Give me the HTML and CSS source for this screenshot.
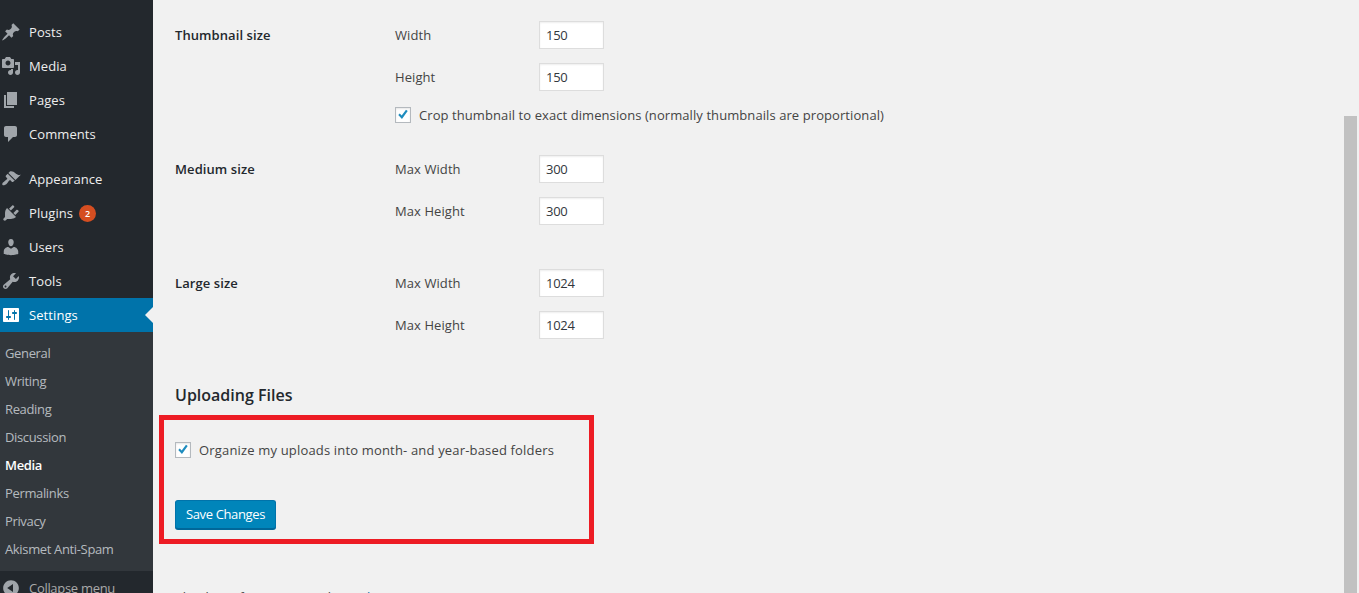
FILE: index.html
```html
<!DOCTYPE html>
<html lang="en">
<head>
  <meta charset="UTF-8" />
  <title>Media Settings</title>
  <link rel="stylesheet" href="styles.css">
</head>
<body>

  <div class="sidebar">
    <ul class="menu">
      <li><svg class="icon" viewBox="0 0 20 20"><path d="M10.44 3.02l1.82-1.82 6.36 6.35-1.83 1.82c-1.05-.68-2.48-.57-3.41.36l-.75.75c-.92.93-1.04 2.35-.35 3.41l-1.83 1.82-2.41-2.41-2.8 2.79c-.42.42-3.38 2.71-3.8 2.29s1.86-3.39 2.28-3.81l2.79-2.79L4.1 9.36l1.83-1.82c1.05.69 2.48.57 3.4-.36l.75-.75c.93-.92 1.05-2.35.36-3.41z"/></svg>Posts</li>
      <li><svg class="icon" viewBox="0 0 20 20"><path d="M13 11V4c0-.55-.45-1-1-1h-1.67L9 1H5L3.67 3H2c-.55 0-1 .45-1 1v7c0 .55.45 1 1 1h10c.55 0 1-.45 1-1zM7 4.5c1.38 0 2.5 1.12 2.5 2.5S8.38 9.5 7 9.5 4.5 8.38 4.5 7 5.62 4.5 7 4.5zM14 6h5v10.5c0 1.38-1.12 2.5-2.5 2.5S14 17.88 14 16.5s1.12-2.5 2.5-2.5c.17 0 .34.02.5.05V9h-3V6zm-4 8.05V13h2v3.5c0 1.38-1.12 2.5-2.5 2.5S7 17.88 7 16.5 8.12 14 9.5 14c.17 0 .34.02.5.05z"/></svg>Media</li>
      <li><svg class="icon" viewBox="0 0 20 20"><path d="M6 15V2h10v13H6zm-1 1h8v2H3V5h2v11z"/></svg>Pages</li>
      <li><svg class="icon" viewBox="0 0 20 20"><path d="M5 2h9c1.1 0 2 .9 2 2v7c0 1.1-.9 2-2 2h-2l-5 5v-5H5c-1.1 0-2-.9-2-2V4c0-1.1.9-2 2-2z"/></svg>Comments</li>
      <li class="separator"></li>
      <li><svg class="icon" viewBox="0 0 20 20"><path d="M14.48 11.06L7.41 3.99l1.5-1.5c.5-.56 2.3-.47 3.51.32 1.21.8 1.43 1.28 2.91 2.1 1.18.64 2.45 1.26 4.45.85zm-.71.71L6.7 4.7 4.93 6.47c-.39.39-.39 1.02 0 1.41l1.06 1.06c.39.39.39 1.03 0 1.42-.6.6-1.43 1.11-2.21 1.69-.35.26-.7.53-1.01.84C1.43 13.23.78 15.21 1.53 16s2.79.2 4.22-1.16c.31-.31.57-.66.84-1.01.58-.78 1.09-1.61 1.69-2.21.39-.39 1.03-.39 1.42 0l1.06 1.06c.39.39 1.02.39 1.41 0z"/></svg>Appearance</li>
      <li><svg class="icon" viewBox="0 0 20 20"><path d="M13.11 4.36L9.87 7.6 8 5.73l3.24-3.24c.35-.34 1.05-.2 1.56.32.52.51.66 1.21.31 1.55zm-8 1.77l.91-1.12 9.01 9.01-1.19.84c-.71.71-2.63 1.16-3.82 1.16H6.14L4.9 17.26c-.59.59-1.54.59-2.12 0-.59-.58-.59-1.53 0-2.12l1.24-1.24v-3.88c0-1.13.4-3.19 1.09-3.89zm7.26 3.97l3.24-3.24c.34-.35 1.04-.21 1.55.31.52.51.66 1.21.31 1.55l-3.24 3.25z"/></svg>Plugins<span class="badge">2</span></li>
      <li><svg class="icon" viewBox="0 0 20 20"><path d="M10 9.25c-2.27 0-2.73-3.44-2.73-3.44C7 4.02 7.82 2 9.97 2c2.16 0 2.98 2.02 2.71 3.81 0 0-.41 3.44-2.68 3.44zm0 2.57L12.72 10c2.39 0 4.52 2.33 4.52 4.53v2.49s-3.65 1.13-7.24 1.13c-3.65 0-7.24-1.13-7.24-1.13v-2.49c0-2.25 1.94-4.48 4.47-4.48z"/></svg>Users</li>
      <li><svg class="icon" viewBox="0 0 20 20"><path d="M16.68 9.77c-1.34 1.34-3.3 1.67-4.95.99l-5.41 6.52c-.99.99-2.59.99-3.58 0s-.99-2.59 0-3.57l6.52-5.42c-.68-1.65-.35-3.61.99-4.95 1.28-1.28 3.12-1.62 4.72-1.06l-2.89 2.89 2.82 2.82 2.86-2.87c.53 1.58.18 3.39-1.08 4.65zM3.81 16.21c.4.39 1.04.39 1.43 0 .4-.4.4-1.04 0-1.43-.39-.4-1.03-.4-1.43 0-.39.39-.39 1.03 0 1.43z"/></svg>Tools</li>
      <li class="current"><svg class="icon" viewBox="0 0 20 20"><path d="M18 16V4c0-.55-.45-1-1-1H3c-.55 0-1 .45-1 1v12c0 .55.45 1 1 1h14c.55 0 1-.45 1-1zM8 11h1c.55 0 1 .45 1 1s-.45 1-1 1H8v1.5c0 .28-.22.5-.5.5s-.5-.22-.5-.5V13H6c-.55 0-1-.45-1-1s.45-1 1-1h1V5.5c0-.28.22-.5.5-.5s.5.22.5.5V11zm5-2h-1c-.55 0-1-.45-1-1s.45-1 1-1h1V5.5c0-.28.22-.5.5-.5s.5.22.5.5V7h1c.55 0 1 .45 1 1s-.45 1-1 1h-1v5.5c0 .28-.22.5-.5.5s-.5-.22-.5-.5V9z"/></svg>Settings</li>
    </ul>
    <ul class="submenu">
      <li>General</li>
      <li>Writing</li>
      <li>Reading</li>
      <li>Discussion</li>
      <li class="active">Media</li>
      <li>Permalinks</li>
      <li>Privacy</li>
      <li>Akismet Anti-Spam</li>
    </ul>
    <div class="collapse">
      <svg class="icon" viewBox="0 0 20 20"><path d="M10 2.16c4.33 0 7.84 3.51 7.84 7.84s-3.51 7.84-7.84 7.84S2.16 14.33 2.16 10 5.71 2.16 10 2.16zm2 11.72V6.12L6.18 9.97z"/></svg>Collapse menu
    </div>
  </div>

  <div class="content">
    <div class="setting thumbnail">
      <div class="setting-name">Thumbnail size</div>
      <div class="fields">
        <label class="field"><span>Width</span><input type="text" value="150"></label>
        <label class="field"><span>Height</span><input type="text" value="150"></label>
        <div class="check-row">
          <span class="checkbox"><svg viewBox="0 0 16 16"><path d="M2.6 8l1.7-1.7 2.2 2.3 4.9-6.7 2 1.4-6.6 9.2z"/></svg></span>
          Crop thumbnail to exact dimensions (normally thumbnails are proportional)
        </div>
      </div>
    </div>

    <div class="setting medium">
      <div class="setting-name">Medium size</div>
      <div class="fields">
        <label class="field"><span>Max Width</span><input type="text" value="300"></label>
        <label class="field"><span>Max Height</span><input type="text" value="300"></label>
      </div>
    </div>

    <div class="setting">
      <div class="setting-name">Large size</div>
      <div class="fields">
        <label class="field"><span>Max Width</span><input type="text" value="1024"></label>
        <label class="field"><span>Max Height</span><input type="text" value="1024"></label>
      </div>
    </div>

    <h2>Uploading Files</h2>
    <div class="check-row uploads">
      <span class="checkbox"><svg viewBox="0 0 16 16"><path d="M2.6 8l1.7-1.7 2.2 2.3 4.9-6.7 2 1.4-6.6 9.2z"/></svg></span>
      Organize my uploads into month- and year-based folders
    </div>
    <button class="save-btn">Save Changes</button>

    <div class="footer">
      <span class="thanks">Thank you for creating with <a href="#">WordPress</a>.</span>
      <a class="version" href="#">Get Version 5.0</a>
    </div>

    <div class="highlight"></div>
  </div>

  <div class="scroll-thumb"></div>

</body>
</html>
```

FILE: styles.css
```css
html, body {
  height: 593px;
  overflow: hidden;
}

body {
  margin: 0;
  display: flex;
  background-color: #f1f1f1;
  color: #444;
  font-family: "Open Sans", sans-serif;
  font-size: 13px;
  letter-spacing: 0.08px;
}

ul {
  list-style: none;
  margin: 0;
  padding: 0;
}

.sidebar {
  width: 153px;
  height: 593px;
  flex-shrink: 0;
  background-color: #23282d;
  overflow: hidden;
}

.menu {
  padding-top: 15px;
}

.menu li {
  height: 34px;
  display: flex;
  align-items: center;
  color: #eee;
  position: relative;
}

.menu .separator {
  height: 11px;
}

.icon {
  width: 20px;
  height: 20px;
  margin: 0 8px 0 1px;
  fill: #a0a5aa;
  flex-shrink: 0;
}

.menu .current {
  background-color: #0073aa;
  color: #fff;
}

.menu .current .icon {
  fill: #fff;
}

.menu .current::after {
  content: "";
  position: absolute;
  right: 0;
  top: 9px;
  border: 8px solid transparent;
  border-right-color: #f1f1f1;
  border-left-width: 0;
}

.badge {
  width: 17px;
  height: 17px;
  margin-left: 6px;
  border-radius: 50%;
  background-color: #d54e21;
  color: #fff;
  font-size: 9px;
  font-weight: 600;
  letter-spacing: 0;
  display: flex;
  align-items: center;
  justify-content: center;
}

.submenu {
  background-color: #32373c;
  padding: 7px 0 8px 5px;
  letter-spacing: -0.35px;
}

.submenu li {
  height: 28px;
  line-height: 28px;
  color: rgba(240, 245, 250, 0.7);
}

.submenu .active {
  color: #fff;
  font-weight: 600;
}

.collapse {
  height: 34px;
  display: flex;
  align-items: center;
  color: #aaa;
  letter-spacing: -0.3px;
}

.content {
  flex: 1;
  padding: 21px 0 0 22px;
  position: relative;
}

.setting {
  display: flex;
}

.setting-name {
  width: 220px;
  line-height: 28px;
  font-weight: 600;
  color: #23282d;
}

.fields {
  display: flex;
  flex-direction: column;
  gap: 14px;
}

.thumbnail {
  margin-bottom: 30px;
}

.medium {
  margin-bottom: 44px;
}

.field {
  display: flex;
  align-items: center;
}

.field span {
  width: 144px;
}

.field input {
  width: 65px;
  height: 28px;
  box-sizing: border-box;
  padding: 0 6px;
  border: 1px solid #ddd;
  box-shadow: inset 0 1px 2px rgba(0, 0, 0, 0.07);
  background-color: #fff;
  color: #32373c;
  font: inherit;
  letter-spacing: -0.3px;
  outline: none;
}

.check-row {
  height: 20px;
  display: flex;
  align-items: center;
  gap: 8px;
}

.checkbox {
  width: 16px;
  height: 16px;
  box-sizing: border-box;
  border: 1px solid #b4b9be;
  background-color: #fff;
  box-shadow: inset 0 1px 2px rgba(0, 0, 0, 0.1);
  flex-shrink: 0;
}

.checkbox svg {
  display: block;
  width: 14px;
  height: 14px;
  fill: #1e8cbe;
}

h2 {
  margin: 46px 0 0;
  height: 20px;
  line-height: 20px;
  font-size: 16px;
  font-weight: 600;
  letter-spacing: 0;
  color: #23282d;
}

.uploads {
  margin-top: 35px;
  letter-spacing: 0.17px;
}

.save-btn {
  display: block;
  margin-top: 40px;
  width: 101px;
  height: 29px;
  padding: 0 0 2px;
  border: 1px solid #0073aa;
  border-bottom-color: #006799;
  border-radius: 3px;
  box-shadow: 0 1px 0 #006799;
  background-color: #0085ba;
  color: #fff;
  font: inherit;
  letter-spacing: -0.35px;
}

.footer {
  margin-top: 58px;
  display: flex;
  justify-content: space-between;
  padding-right: 28px;
  line-height: 20px;
}

.footer a {
  color: #0073aa;
  text-decoration: none;
}

.thanks {
  font-style: italic;
}

.highlight {
  position: absolute;
  left: 6px;
  top: 415px;
  width: 435px;
  height: 129px;
  box-sizing: border-box;
  border: 5px solid #ed1c24;
}

.scroll-thumb {
  position: absolute;
  left: 1344px;
  top: 116px;
  width: 13px;
  height: 477px;
  background-color: #c1c1c1;
}
```
